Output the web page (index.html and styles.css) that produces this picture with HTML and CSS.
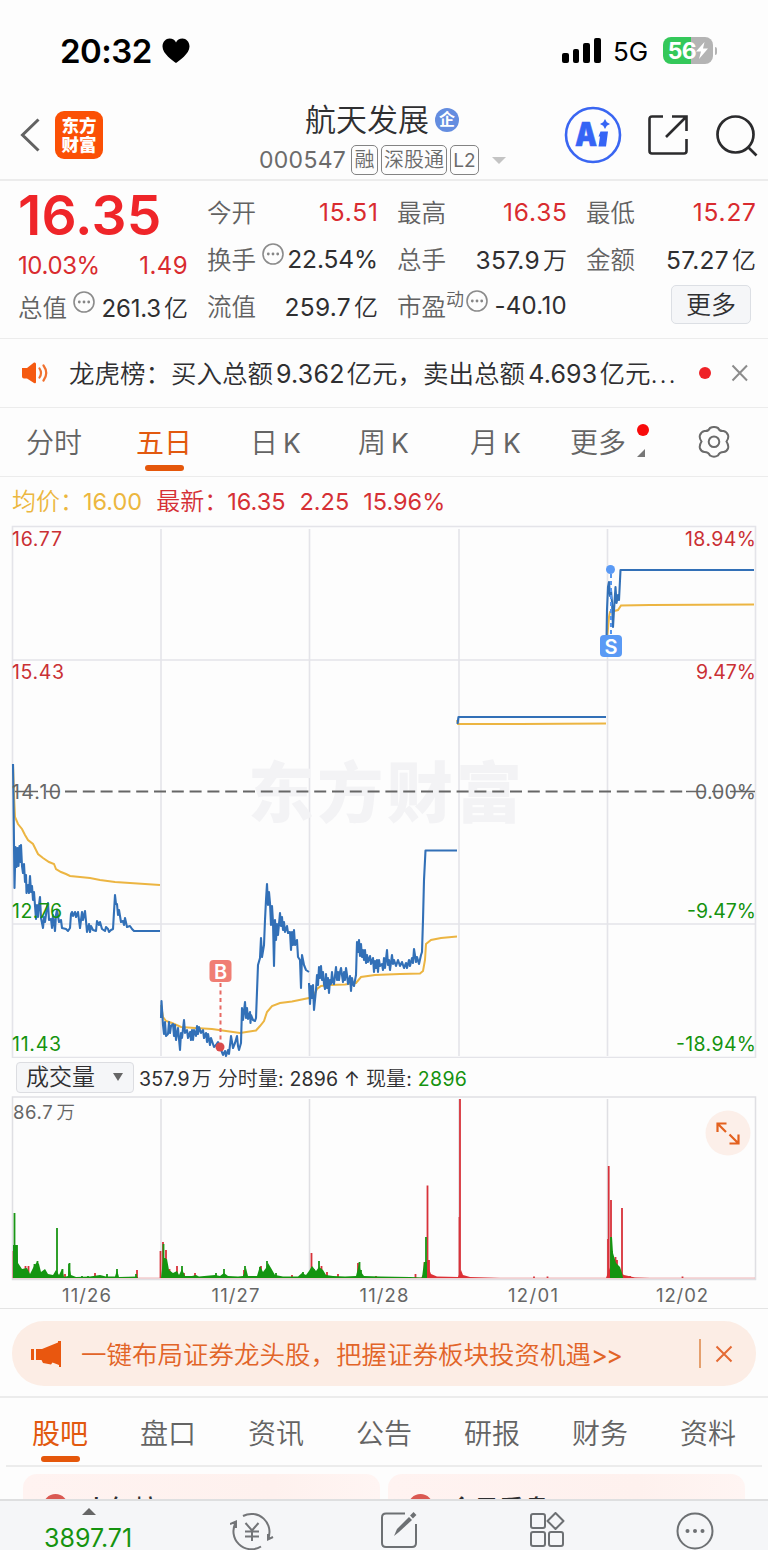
FILE: index.html
```html
<!DOCTYPE html>
<html lang="zh-CN">
<head>
<meta charset="utf-8">
<meta name="viewport" content="width=device-width, initial-scale=1">
<title>航天发展 000547</title>
<link rel="stylesheet" href="styles.css">
</head>
<body>
<div class="status">
  <span class="clock">20:32</span>
  <svg class="heart" width="28" height="26" viewBox="0 0 28 26"><path d="M14 25C11 22.500 .5 16 .5 8.500C.5 3.500 4 .5 7.500 .5C10.500 .5 13 2 14 4.500C15 2 17.500 .5 20.500 .5C24 .5 27.500 3.500 27.500 8.500C27.500 16 17 22.500 14 25Z"/></svg>
  <svg class="signal" width="39" height="26" viewBox="0 0 39 26"><rect x="0" y="15" width="7" height="10" rx="2"/><rect x="11" y="11" width="6" height="14" rx="2"/><rect x="21" y="5" width="7" height="20" rx="2"/><rect x="32" y="0" width="7" height="25" rx="2"/></svg>
  <span class="net">5G</span>
  <span class="battery"><span>56</span><svg width="12" height="17" viewBox="0 0 12 17"><path d="M8.500 0L0 9.500H5L3 17L12 6.500H7Z" fill="#fff"/></svg></span><i class="nub"></i>
</div>

<header class="header">
  <svg class="back" width="20" height="34" viewBox="0 0 20 34"><path d="M18.500 1.500L2.500 17L18.500 32.500" fill="none" stroke="#626262" stroke-width="3"/></svg>
  <div class="logo">东方<br>财富</div>
  <div class="title-box">
    <div class="title">航天发展<span class="ent">企</span></div>
    <div class="sub"><span class="code">000547</span><span class="tag t1">融</span><span class="tag t2">深股通</span><span class="tag t3">L2</span><i class="caret"></i></div>
  </div>
  <svg class="ai" width="58" height="58" viewBox="0 0 58 58"><circle cx="29" cy="29" r="27" fill="none" stroke="#3a66f2" stroke-width="2.600"/><text x="11" y="40" class="ai-a" textLength="22" lengthAdjust="spacingAndGlyphs">A</text><path d="M36.500 25.500H44L42 40.500H34.500L36 30.500H34.500Z" fill="#3564f5"/><path d="M41 13L42.800 16.200L46 18L42.800 19.800L41 23L39.200 19.800L36 18L39.200 16.200Z" fill="#3564f5"/></svg>
  <svg class="share" width="42" height="42" viewBox="0 0 42 42" fill="none" stroke="#2b2b2d" stroke-width="2.600"><path d="M16 2.500H5Q2.500 2.500 2.500 5V37Q2.500 39.500 5 39.500H37Q39.500 39.500 39.500 37V25M25 2.500H39.500V17M38.500 3.500L19 23"/></svg>
  <svg class="search" width="44" height="44" viewBox="0 0 44 44" fill="none" stroke="#2b2b2d" stroke-width="2.700"><circle cx="20.500" cy="20.500" r="18"/><path d="M33 33L41.500 41.500"/></svg>
</header>

<section class="quote">
  <div class="col c0">
    <div class="price">16.35</div>
    <div class="r red sm2"><span>10.03%</span><span class="chg">1.49</span></div>
    <div class="r low"><span class="lab">总值<svg class="dots" viewBox="0 0 22 22"><use href="#more"/></svg></span><span class="val s">261.3<b>亿</b></span></div>
  </div>
  <div class="col">
    <div class="r"><span class="lab">今开</span><span class="val red px">15.51</span></div>
    <div class="r"><span class="lab">换手<svg class="dots" viewBox="0 0 22 22"><use href="#more"/></svg></span><span class="val pct">22.54%</span></div>
    <div class="r"><span class="lab">流值</span><span class="val">259.7<b>亿</b></span></div>
  </div>
  <div class="col">
    <div class="r"><span class="lab">最高</span><span class="val red px">16.35</span></div>
    <div class="r"><span class="lab">总手</span><span class="val">357.9<b>万</b></span></div>
    <div class="r"><span class="lab">市盈<small>动</small><svg class="dots tight" viewBox="0 0 22 22"><use href="#more"/></svg></span><span class="val s wide">-40.10</span></div>
  </div>
  <div class="col">
    <div class="r"><span class="lab">最低</span><span class="val red px">15.27</span></div>
    <div class="r"><span class="lab">金额</span><span class="val">57.27<b>亿</b></span></div>
    <div class="r end"><span class="more-btn">更多</span></div>
  </div>
</section>

<section class="news">
  <svg width="27" height="22" viewBox="0 0 27 22"><path d="M0 6H5L12 .5Q14 0 14 2V20Q14 22 12 21L5 16.500H2Q0 16.500 0 14.500Z" fill="#f55a11"/><path d="M17.500 6.500Q20.500 11 17.500 15.500M21.500 3.500Q27 11 21.500 18.500" fill="none" stroke="#f0712f" stroke-width="2.200" stroke-linecap="round"/></svg>
  <span class="news-text">龙虎榜：买入总额<em>9.362</em>亿元，卖出总额<em>4.693</em>亿元<span class="ell">...</span></span>
  <i class="dot"></i>
  <svg width="18" height="18" viewBox="0 0 18 18"><path d="M1.500 1.500L16 16.500M16 1.500L1.500 16.500" stroke="#8c8c8c" stroke-width="2" fill="none"/></svg>
</section>

<nav class="periods">
  <span class="p1">分时</span><span class="p2 on">五日</span><span class="p3">日<em>K</em></span><span class="p4">周<em>K</em></span><span class="p5">月<em>K</em></span><span class="p6">更多<i class="badge"></i><i class="corner"></i></span>
  <svg width="34" height="32" viewBox="0 0 34 32" fill="none" stroke="#6b6b6b" stroke-width="2"><path d="M13 2Q17 0 21 2Q22.500 5.500 26.500 5Q29.500 5.500 31 9Q32 12 29.500 15.500Q32 19.500 31 22.500Q29.500 26 26.500 26Q22.500 26 21 29.500Q17 32 13 29.500Q11.500 26 7.500 26Q4.500 26 3 22.500Q2 19.500 4.500 15.500Q2 12 3 9Q4.500 5.500 7.500 5Q11.500 5.500 13 2Z"/><circle cx="17" cy="15.800" r="5.300"/></svg>
</nav>

<div class="legend"><span class="avg">均价：<em>16.00</em></span><span class="new">最新：<em>16.35</em></span><em>2.25</em><em>15.96%</em></div>

<svg class="chart" width="768" height="533" viewBox="0 525 768 533">
  <g class="grid"><path d="M12.500 526.500H755.500V1057.500H12.500ZM12 660H756M12 924H756M161 529V1056M309.500 529V1056M459 529V1056M607.500 529V1056"/></g>
  <text class="mark" x="248" y="817" textLength="274">东方财富</text>
  <g class="avgline">
    <path d="M13 764L14 795L15 817L18 824L22 829L25 835L28 840L33 844L36 850L38 854L43 858L49 862L54 864L56 869L61 872L66 874L70 876L80 877L90 878L100 880L115 882L130 883L145 884L160 885"/>
    <path d="M161 1005L163 1017L166 1021L172 1023L181 1027L195 1028L212 1029L226 1031L240 1033L256 1030.500L260 1026L264 1021L267 1012L272 1006L280 1003L292 1001.500L309 998L314 995L317 989L321 986L330 985L345 984.500L356 983L361 977L375 975L400 974L420 973.500L423 971L425 960L426 944L431 940L441 938L457 936.500"/>
    <path d="M457 720L458 724H520L606 723.500M607 640L609 617L610 612L618 610L621 605.500L650 605L754 604.500"/>
  </g>
  <g class="priceline">
    <path d="M13 764L13.500 800L14.500 888L15.500 847L16.500 867L17.500 848L18.500 866L19.500 846L20.500 862L21 845L22 866L23 873L24 864L25 882L26 875L26.500 893L28 885L29 893L30 876L31 892L32 886L33 900L34 892L36 919L37 905L38 917L39 905L40 897L41 918L43 928L44 917L45 922L47 907L48 903L49 920L51 919L52 928L53 915L55 931L56 915L57 910L59 922L61 920L62 928L66 929L68 931L70 928L71 914L72 912L73 916L75 912L76 917L78 912L80 928L82 912L83 920L85 911L86 921L87 932L89 924L90 932L91 926L93 930L96 931L97 921L99 925L100 922L102 929L105 931L106 927L108 929L109 932L111 930L113 929L115 895L116 904L117 904L118 915L119 910L121 922L123 921L124 925L125 918L127 927L130 926L132 929L134 931H160"/>
    <path d="M161 1018L161.500 1001L163 1025L164 1034L165 1022L166 1036L168 1034L169 1022L170 1033L171 1026L173 1024L174 1036L175 1025L176 1040L178 1028L180 1050L181 1033L182 1038L184 1020L185 1033L187 1030L188 1038L190 1032L191 1040L192 1030L193 1040L194 1030L196 1036L197 1026L198 1034L199 1027L201 1033L203 1030L204 1038L206 1033L207 1042L208 1034L210 1045L211 1038L213 1044L214 1047L216 1045L218 1042L220 1047L223 1055L225 1051L226 1056L228 1050L229 1054L231 1036L233 1048L235 1043L237 1036L238 1046L239 1050L241 1043L242 1008L243 1020L245 1002L246 1018L247 1008L248 1019L250 1012L250.500 1023L251 1015L253 1020L255 1021L256 1018L258 965L260 958L261 938L262 957L264 945L265 920L266 900L267 884L268 905L269 892L270 903L271 925L272 906L273 922L274 966L275 920L276 940L277 924L278 935L280 913L281 926L282 917L283 930L284 922L285 932L287 926L288 933L290 932L291 950L292 932L293 945L294 930L295 945L297 940L298 957L300 960L301 988L302 955L304 965L306 970L309 972"/>
    <path d="M309 983L310 1004L311 986L312 998L313 985L314 1010L316 990L317 975L318 985L319 967L320 978L321 966L322 980L323 972L324 984L325 989L326 974L327 988L328 978L329 993L330 980L331 984L332 972L333 982L334 984L336 967L337 980L338 972L339 980L340 972L341 968L343 982L344 972L345 980L346 968L347 975L348 984L350 976L351 991L352 978L353 984L354 986L356 975L357 942L358 952L359 940L360 956L361 944L362 957L363 950L364 960L365 950L366 963L367 955L368 962L370 956L371 964L373 958L374 972L375 961L376 968L377 960L378 972L379 960L380 966L382 964L383 970L384 958L385 968L387 950L388 965L389 960L390 970L392 955L393 964L394 960L396 966L398 960L400 966L402 962L404 968L406 963L407 968L409 960L410 966L412 958L413 963L414 949L416 962L417 957L419 964L421 955L422 952L423 920L424 880L425.500 850.500H457"/>
    <path d="M457.500 724L458.500 717H606M606.500 640L607 610L608 587L609 582L610 596L611 590L612 602L613 627L614 610L615.500 587L616.500 603L618 595L619 600L620.500 570H754"/>
  </g>
  <path d="M220.500 983V1040" stroke="#e76a64" stroke-width="2" stroke-dasharray="4 3.500"/>
  <circle cx="220" cy="1047" r="4.500" fill="#d94b4b"/>
  <rect x="209.500" y="960" width="22" height="22" rx="4" fill="#f07e74"/><text x="220.500" y="978.500" class="pin">B</text>
  <path d="M611 574V634" stroke="#5595ec" stroke-width="2" stroke-dasharray="4 3"/>
  <circle cx="610.500" cy="569.500" r="4.500" fill="#5a9af5"/>
  <rect x="600" y="635" width="22" height="22" rx="4" fill="#5a9af5"/><text x="611" y="653.500" class="pin">S</text>
  <g class="axis">
    <text class="up" x="12" y="546" textLength="50">16.77</text><text class="up" x="12" y="678.500" textLength="52">15.43</text><text x="12" y="798.500" textLength="49">14.10</text><text class="down" x="12" y="918" textLength="50">12.76</text><text class="down" x="12" y="1051" textLength="49">11.43</text>
    <text class="up" x="685" y="546" textLength="71">18.94%</text><text class="up" x="696" y="678.500" textLength="60">9.47%</text><text x="695" y="798.500" textLength="61">0.00%</text><text class="down" x="687" y="918" textLength="69">-9.47%</text><text class="down" x="676" y="1051" textLength="80">-18.94%</text>
  </g>
  <path class="zero" d="M65 791.500H684"/><path class="strike" d="M15 791.500H38M46 791.500H60M686 791.500H705M712 791.500H722M730 791.500H755"/>
</svg>

<div class="volbar"><span class="select">成交量<i></i></span><span class="voltext">357.9<b>万</b> <b>分时量</b>: 2896 ↑ <b>现量</b>: <em>2896</em></span></div>

<svg class="volume" width="768" height="212" viewBox="0 1096 768 212">
  <path class="vgrid" d="M12.500 1097H755.500V1279.500H12.500ZM161 1099V1278M309.500 1099V1278M459 1099V1278M607.500 1099V1278"/>
  <path class="vbase" d="M13 1278H755"/>
  <path class="vr" d="M13.500 1278V1251M25.500 1278V1266M28.500 1278V1266M34 1278V1269M65 1278V1274M95 1278V1273M137 1278V1270M160.500 1278V1251M163 1278V1242M166 1278V1250M169.500 1278V1269M177 1278V1266M184 1278V1273M195 1278V1273M228 1278V1276M244 1278V1270M261 1278V1266M292 1278V1275M311.500 1278V1253M314 1278V1269M321.500 1278V1266M327 1278V1272M338 1278V1274M358 1278V1263M376 1278V1276M415.500 1278V1274M424.500 1278V1262M427.500 1278V1185.500M429 1278V1260M459.500 1278V1217M460 1278V1099M608 1278V1239M608.700 1278V1166M611 1278V1200M615.500 1278V1257M617 1278V1260M622 1278V1208M534 1278V1276.500M547.500 1278V1276.500M630 1278V1276M682.500 1278V1276.500"/>
  <path class="vrf" d="M421 1278L424 1273L429 1269L431 1274L437 1276.500L458 1277L461 1270L463 1275L470 1277L500 1278ZM606 1278L612 1262L620 1272L624 1275L635 1277.500L650 1278Z"/>
  <path class="vg" d="M14.500 1278V1213M17 1278V1245M34.500 1278V1264M37.500 1278V1261M57 1278V1228M62.500 1278V1269M69 1278V1264M69.500 1278V1263M82 1278V1276M88 1278V1276M107 1278V1274M117 1278V1269M136 1278V1274M163.500 1278V1244M165 1278V1258M182 1278V1266M216 1278V1273M224 1278V1269M245 1278V1266M260 1278V1267M267 1278V1261M276 1278V1273M303 1278V1272M319 1278V1261M359.500 1278V1262M361 1278V1270M426 1278V1237M611 1278V1237M612 1278V1251"/>
  <path class="vgf" d="M13 1278V1245H17L18 1263L22 1269L27 1268L30 1274L34 1266L37 1262L39 1264L41 1272L45 1269L48 1274L53 1275L56 1270L59 1275L62 1269L64 1277L68 1276L69 1265L71 1275L76 1277L90 1276.500L100 1275L106 1276.500L115 1276.500L117 1270L119 1277L137 1276.500L138 1278ZM161 1278L163 1260L167 1259L169 1270L173 1273L177 1271L179 1275L182 1269L185 1276L192 1276L196 1275L199 1276.500L215 1275L220 1276L224 1273L228 1276L238 1276.500L243 1276L246 1268L248 1276L257 1276L260 1266L263 1272L266 1268L268 1263L271 1268L275 1275L283 1276.500L298 1276.500L302 1273L306 1275L309 1271L312 1266L316 1271L319 1267L323 1270L326 1275L333 1276L345 1276.500L356 1276L359 1264L361 1272L364 1276L380 1276.500L410 1277L422 1277.500L424 1262H427V1278ZM610 1278L611 1237H612L613 1253L616 1263L620 1267L622 1273L623 1278Z"/>
  <text x="13" y="1118.500" class="vlab" textLength="62">86.7<tspan dx="3" class="cjk">万</tspan></text>
  <circle cx="728" cy="1133" r="22.500" fill="#fcefe9"/>
  <path d="M717.500 1132V1123.500H726.500M718 1124L726 1132M738.500 1134.500V1143.500H729.500M738 1143L729.500 1134.500" stroke="#e3611f" stroke-width="2.200" fill="none"/>
  <g class="dates"><text x="62" y="1301.500" textLength="49">11/26</text><text x="211.500" y="1301.500" textLength="48">11/27</text><text x="359.500" y="1301.500" textLength="49">11/28</text><text x="508" y="1301.500" textLength="50">12/01</text><text x="656" y="1301.500" textLength="52">12/02</text></g>
</svg>

<section class="promo"><div class="pill">
  <svg width="31" height="26" viewBox="0 0 31 26" fill="#e9570f"><rect y="8" width="3" height="11"/><path d="M5 8H11L27 1.500V0H30V26H28V24L21.500 21.500L20 23.500L12 22L10.500 19H5Z"/></svg>
  <span class="promo-text">一键布局证券龙头股，把握证券板块投资机遇<span class="gt">&gt;&gt;</span></span><i></i>
  <svg width="18" height="18" viewBox="0 0 18 18"><path d="M1.500 1.500L16.500 16.500M16.500 1.500L1.500 16.500" stroke="#e46a34" stroke-width="2"/></svg>
</div></section>

<nav class="tabs"><span class="on">股吧</span><span>盘口</span><span>资讯</span><span>公告</span><span>研报</span><span>财务</span><span>资料</span></nav>

<section class="cards"><div class="card"><i></i><span>人气榜</span></div><div class="card two"><i></i><span>今日看盘</span></div></section>

<footer class="bottom">
  <div class="index"><i></i><span>3897.71</span></div>
  <svg width="44" height="38" viewBox="0 0 44 38" fill="none" stroke="#737578" stroke-width="2"><path d="M13 4A18 18 0 0 1 38 27M31 34.500A18 18 0 0 1 6 10M0 12L6 9.500V16M43 25L38 27.500V22"/><path d="M15.500 11L22 18.500L28.500 11M22 18.500V29M15 19.500H29M15 24.500H29"/></svg>
  <svg width="38" height="37" viewBox="0 0 38 37" fill="none" stroke="#6d7073" stroke-width="2"><path d="M25 1.500H6Q2 1.500 2 5.500V31Q2 35 6 35H32Q36 35 36 31V12"/><path d="M14 24L17 17L29 5L32 8L19 20Z" fill="#6d7073" stroke="none"/><path d="M31.500 5L35 1.500" stroke-width="4"/></svg>
  <svg width="36" height="36" viewBox="0 0 36 36" fill="none" stroke="#6d7073" stroke-width="2"><rect x="2" y="2" width="14" height="14" rx="2"/><path d="M26.500 1L34.500 9L26.500 17L18.500 9Z" stroke-linejoin="round"/><rect x="2" y="20" width="14" height="14" rx="2"/><rect x="20" y="20" width="14" height="14" rx="2"/></svg>
  <svg width="38" height="38" viewBox="0 0 38 38"><circle cx="19" cy="19" r="17.500" fill="none" stroke="#6d7073" stroke-width="2"/><g fill="#6d7073"><circle cx="11.500" cy="19" r="2"/><circle cx="19" cy="19" r="2"/><circle cx="26.500" cy="19" r="2"/></g></svg>
</footer>
<svg class="defs" width="0" height="0"><symbol id="more" viewBox="0 0 22 22"><circle cx="11" cy="11" r="10" fill="none" stroke="#8b8b8b" stroke-width="1.600"/><g fill="#858585"><circle cx="6.300" cy="11" r="1.400"/><circle cx="11" cy="11" r="1.400"/><circle cx="15.700" cy="11" r="1.400"/></g></symbol></svg>
</body>
</html>
```
FILE: styles.css
```css
* { box-sizing: border-box; }
html, body { margin: 0; padding: 0; }
body { width: 768px; height: 1550px; overflow: hidden; background: #fdfdfd; color: #2f2f31; font-family: Inter, "Noto Sans CJK SC", sans-serif; font-weight: 400; position: relative; }
svg { display: block; flex: none; }
i, em { font-style: normal; }
.status { height: 100px; display: flex; align-items: center; padding: 1px 0 0 60px; color: #000; }
.clock { font-size: 33px; font-weight: 600; width: 102px; letter-spacing: -.5px; }
.signal { margin-left: 372px; }
.net { font-size: 26px; margin-left: 12px; width: 38px; letter-spacing: -.1px; padding-top: 2px; }
.battery { margin-left: 12px; width: 50px; height: 27px; border-radius: 8px; background: linear-gradient(90deg, #34c85a 56%, #b4b4b4 56%); color: #fff; display: flex; align-items: center; justify-content: center; font-size: 23px; font-weight: 700; letter-spacing: -.5px; }
.nub { width: 2px; height: 8px; background: #b4b4b4; border-radius: 0 2px 2px 0; margin-left: 2px; }
.header { height: 81px; border-bottom: 2px solid #ececec; display: flex; align-items: flex-start; }
.back { margin: 18px 0 0 20px; }
.logo { margin: 11px 0 0 15px; width: 48px; height: 48px; border-radius: 9px; background: #fb5005; color: #fff; font-size: 17.500px; line-height: 19px; font-weight: 900; text-align: center; padding-top: 5px; }
.title-box { margin-left: 156px; width: 247px; }
.title { height: 40px; line-height: 38px; font-size: 31px; font-weight: 350; padding-left: 46px; display: flex; align-items: center; }
.ent { width: 24px; height: 24px; margin-left: 6px; border-radius: 50%; background: #648de0; color: #fff; font-size: 16px; font-weight: 700; line-height: 23px; text-align: center; }
.sub { height: 40px; display: flex; align-items: center; color: #6b6b6b; }
.code { font-size: 23px; letter-spacing: .3px; width: 94px; }
.tag { border: 1.500px solid #838383; border-radius: 5px; height: 30px; line-height: 29px; text-align: center; font-size: 20px; font-weight: 350; margin-right: 3px; flex: none; }
.t1 { width: 27px; } .t2 { width: 66px; } .t3 { width: 29px; font-weight: 400; font-size: 19px; }
.caret { margin-left: 10px; border: 7px solid transparent; border-top-color: #c4c4c4; border-bottom: 0; }
.ai { margin: 6px 0 0 58px; }
.ai-a { font: 900 33px Inter; fill: #3564f5; stroke: #3564f5; stroke-width: .6px; }
.share { margin: 14px 0 0 25px; }
.search { margin: 14px 0 0 26px; }
.quote { height: 158px; display: grid; grid-template-columns: 170px 171px 170px 170px; column-gap: 19px; padding: 7px 0 0 18px; border-bottom: 1px solid #ececec; }
.col { min-width: 0; }
.r { height: 47px; display: flex; align-items: center; justify-content: space-between; white-space: nowrap; }
.price { height: 54px; line-height: 54px; font-size: 55px; font-weight: 600; color: #ef2529; letter-spacing: .2px; }
.sm2 { font-size: 24px; height: 47px; letter-spacing: -.4px; }
.chg { letter-spacing: .4px; }
.low { height: 35px; }
.red { color: #d92b2f !important; }
.lab { font-size: 24.500px; color: #626262; font-weight: 350; display: flex; align-items: center; }
.lab small { font-size: 18px; margin-top: -15px; }
.val { font-size: 24.500px; letter-spacing: .3px; }
.px { letter-spacing: .8px; margin-right: -.8px; }
.pct { letter-spacing: -.1px; }
.val.s { font-size: 24px; letter-spacing: -.2px; }
.val.wide { letter-spacing: .3px; }
.val b { font-weight: 350; margin-left: 3px; font-size: 24px; letter-spacing: 0; }
.dots { width: 22px; height: 22px; margin: -9px 0 0 6px; }
.tight { margin-left: 2px; }
.end { justify-content: flex-end; padding-right: 5px; }
.more-btn { width: 80px; height: 39px; border: 1.500px solid #dcdfe4; border-radius: 5px; background: #f5f6f8; font-size: 25px; font-weight: 350; line-height: 38px; text-align: center; margin-top: -3px; }
.news { height: 69px; border-bottom: 1px solid #ececec; padding: 0 19px 1px 22px; display: flex; align-items: center; }
.news-text { margin: -2px 0 0 20px; width: 616px; font-size: 25.500px; font-weight: 350; white-space: nowrap; }
.news-text em { font-weight: 400; font-size: 25px; margin: 0 2px 0 3px; letter-spacing: .2px; }
.ell { letter-spacing: 1.800px; }
.dot { width: 12px; height: 12px; border-radius: 50%; background: #ef2227; margin: 0 20px 0 16px; }
.periods { height: 69px; border-bottom: 1px solid #ececec; padding-left: 26px; display: flex; align-items: center; font-size: 28px; font-weight: 350; color: #646464; }
.periods > span { position: relative; line-height: 71px; height: 68px; white-space: nowrap; }
.periods em { margin-left: 5px; font-weight: 400; font-size: 26.500px; }
.p1, .p2 { width: 56px; }
.p2 { margin-left: 54px; width: 56px; }
.p3 { margin-left: 58px; width: 51px; } .p4 { margin-left: 57px; width: 52px; } .p5 { margin-left: 60px; width: 52px; } .p6 { margin-left: 48px; width: 56px; }
.on { color: #e2590f; font-weight: 400; position: relative; }
.on::after { content: ""; position: absolute; left: 9px; bottom: 5px; width: 39px; height: 6px; border-radius: 3px; background: #e5570b; }
.badge { position: absolute; width: 12px; height: 12px; border-radius: 50%; background: #f80b0b; left: 67px; top: 16px; }
.corner { position: absolute; left: 67px; top: 41px; border-left: 8px solid transparent; border-bottom: 8px solid #777; }
.periods svg { margin-left: 71px; }
.legend { height: 48px; line-height: 50px; padding-left: 12px; display: flex; gap: 14px; color: #d53035; font-size: 24px; font-weight: 350; }
.legend em { font-weight: 400; font-size: 23.500px; }
.legend span em { margin-left: -1px; }
.avg { color: #ecb73f; }
.grid path { fill: none; stroke: #e4e4e9; stroke-width: 1.600; }
.mark { font: 900 66px "Noto Sans CJK SC"; fill: #f3f3f5; }
.zero { stroke: #666; stroke-width: 2; stroke-dasharray: 12 5.800; }
.strike { stroke: #666; stroke-width: 1.600; }
.avgline path { fill: none; stroke: #ecb542; stroke-width: 2; }
.priceline path { fill: none; stroke: #3270b7; stroke-width: 2.100; stroke-linejoin: round; }
.pin { font: 600 20px Inter; fill: #fff; text-anchor: middle; }
.axis { font-size: 19.500px; fill: #666; }
.up { fill: #ca3034; } .down { fill: #15930f; }
.volbar { height: 38px; display: flex; align-items: center; padding-left: 16px; }
.select { width: 118px; height: 31px; border: 1.500px solid #dcdde1; border-radius: 4px; background: #f5f6f8; font-size: 23px; font-weight: 350; line-height: 30px; padding-left: 9px; display: flex; align-items: center; }
.select i { border: 5px solid transparent; border-top: 8px solid #666; border-bottom: 0; margin-left: 18px; }
.voltext { margin-left: 5px; font-size: 19.500px; white-space: pre; letter-spacing: .15px; }
.voltext b { font-weight: 350; font-size: 20px; }
.voltext b:first-child { margin-left: 2px; }
.voltext em { color: #15930f; letter-spacing: .4px; }
.vgrid { fill: none; stroke: #dfdfe3; stroke-width: 1.500; }
.vbase { stroke: #d8323a; stroke-width: 1; opacity: .35; }
.vr { stroke: #d8323a; stroke-width: 1.800; } .vg { stroke: #1a9615; stroke-width: 1.800; }
.vrf { fill: #dc3035; } .vgf { fill: #149511; }
.vlab, .dates { font-size: 18.500px; font-weight: 400; fill: #666; }
.cjk { font-weight: 350; }
.promo { height: 90px; border-top: 1px solid #e4e4e4; border-bottom: 2px solid #ececec; padding: 12px 12px 0; }
.pill { height: 65px; border-radius: 32px; background: #fcede5; display: flex; align-items: center; padding: 0 23px 0 19px; color: #e26428; }
.promo-text { margin: -3px 0 0 19px; font-size: 25.500px; font-weight: 350; white-space: nowrap; width: 618px; }
.gt { letter-spacing: -2px; font-weight: 400; }
.pill i { width: 1.500px; height: 29px; background: #e5a06e; margin-right: 14px; }
.tabs { height: 69px; margin: 0 6px; border-bottom: 2px solid #ececec; display: flex; justify-content: space-between; padding: 0 26px; font-size: 28px; font-weight: 350; color: #646464; }
.tabs span { line-height: 72px; width: 56px; white-space: nowrap; }
.tabs .on::after { bottom: 3px; }
.cards { height: 32px; padding: 7px 23px 0; display: flex; gap: 8px; overflow: hidden; }
.card { width: 357px; height: 90px; border-radius: 14px; background: linear-gradient(90deg, #fff3f1, #fef1ee 70%, #fff5f3); padding-left: 20px; display: flex; }
.card i { width: 25px; height: 25px; border-radius: 50%; background: #da5952; margin: 20px 16px 0 0; flex: none; }
.card span { font-size: 25px; line-height: 30px; padding-top: 20px; font-weight: 500; }
.bottom { height: 51px; border-top: 2px solid #dedfe0; background: #f5f6f8; display: flex; align-items: flex-start; }
.index { width: 230px; padding: 7px 0 0 44px; color: #15930f; font-size: 25px; letter-spacing: 0; }
.index i { display: block; width: 14px; margin-left: 38px; border: 7px solid transparent; border-bottom: 7px solid #666; border-top: 0; }
.index span { display: block; line-height: 30px; padding-top: 8px; }
.bottom > svg { margin-top: 11px; }
.bottom > svg:nth-of-type(2) { margin-left: 106px; }
.bottom > svg:nth-of-type(3) { margin-left: 111px; }
.bottom > svg:nth-of-type(4) { margin-left: 111px; }
.defs { position: absolute; }
```
